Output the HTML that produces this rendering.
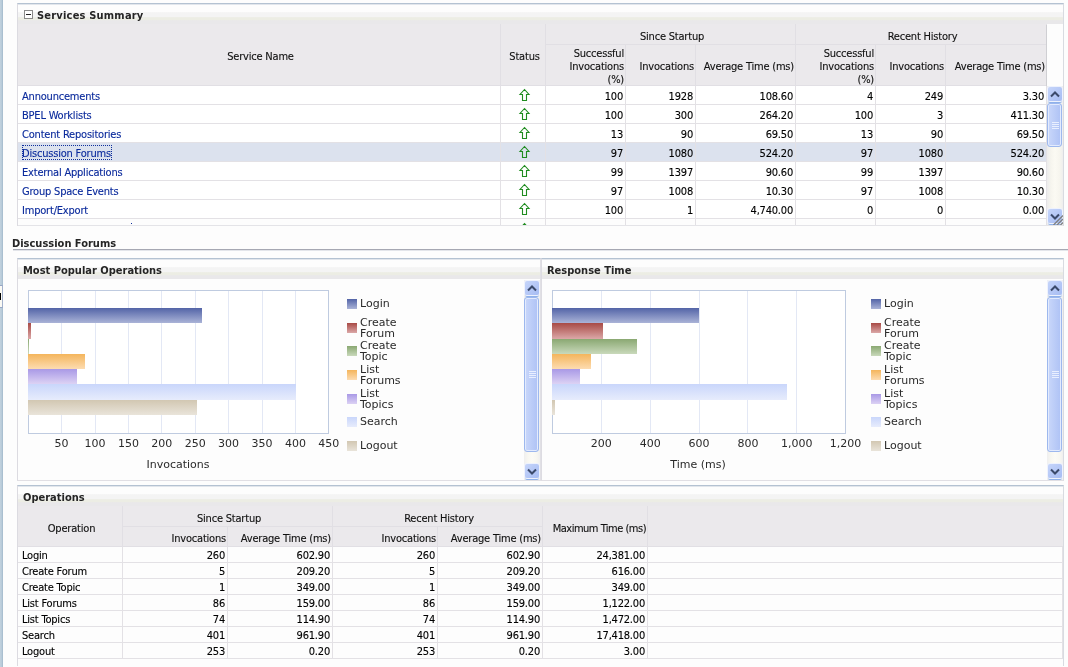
<!DOCTYPE html>
<html lang="en"><head><meta charset="utf-8"><title>Services Summary</title>
<style>
html,body{margin:0;padding:0;}
body{width:1068px;height:667px;overflow:hidden;background:#fff;position:relative;
 font-family:"DejaVu Sans Condensed","Liberation Sans",sans-serif;font-size:11px;color:#000;letter-spacing:-0.2px;-webkit-text-stroke:0.12px;}
div,span,a{box-sizing:border-box;}
.abs{position:absolute;}
.root{left:0;top:0;width:1068px;height:667px;overflow:hidden;will-change:transform;background:#fdfdfd;}
.strip{left:0;top:0;width:3px;height:667px;background:#b3c7d7;}
.panel{border-left:1px solid #dcdbe1;border-right:1px solid #d8dbe1;border-top:1px solid #b4c2d2;}
.phead{left:0;top:0;right:0;height:20px;
 background:linear-gradient(#fdfdfd 0,#fdfdfd 8px,#f4f4f4 8.6px,#f4f4f4 13px,#ecede4 13.6px,#ecede4 16px,#e9e8ea 16.6px,#e9e8ea 100%);}
.ptitle{-webkit-text-stroke:0;font-weight:bold;font-size:11px;color:#252525;white-space:nowrap;line-height:13px;letter-spacing:0;}
.th{background:#ebe9ec;border-right:1px solid #e1dfe4;border-bottom:1px solid #e1dfe4;color:#111;
 display:flex;align-items:center;justify-content:center;text-align:center;line-height:13px;white-space:nowrap;padding-top:2px;}
.th.c{padding-left:3px;}
.th.r{justify-content:flex-end;text-align:right;padding-right:1px;}
.th.t{padding-top:3px;}
.th.u{padding-top:4px;}
.td{border-right:1px solid #e3e1e5;border-bottom:1px solid #e3e1e5;line-height:13px;white-space:nowrap;overflow:hidden;}
.num{text-align:right;padding-right:2px;}
a.lk{color:#0a2a9c;text-decoration:none;}
.ct{-webkit-text-stroke:0;font-family:"DejaVu Sans","Liberation Sans",sans-serif;font-size:11px;color:#2a2a2a;white-space:nowrap;line-height:11px;letter-spacing:0;}
.sbtn{border-radius:2px;box-shadow:0 0 0 1px #eef2fd,0 2px 0 0 #8fb1ea;background:linear-gradient(135deg,#c6d5fa,#a6bcf3);}
.sthumb{border-radius:3px;border:1px solid #9db8ee;box-shadow:inset 0 0 0 1px #e3ebfd;background:linear-gradient(90deg,#c9d7fa,#aec2f5);}
</style></head>
<body>
<div class="abs root">
<div class="abs " style="left:0px;top:0px;width:3px;height:667px;background:linear-gradient(90deg,#c2d2de,#b0c5d5);"></div>
<div class="abs " style="left:2px;top:0px;width:1px;height:667px;background:#aabfd0;"></div>
<div class="abs " style="left:0px;top:285px;width:3px;height:23px;background:#fbfaf4;border-top:1px solid #97a6c4;border-bottom:1px solid #97a6c4;border-right:1px solid #a3b1cc;"></div>
<div class="abs " style="left:0px;top:293px;width:1px;height:7px;background:#000;"></div>
<div class="abs panel" style="left:17px;top:3px;width:1047px;height:223px;"></div>
<div class="abs phead" style="left:18px;top:4px;width:1045px;height:20px;"></div>
<div class="abs " style="left:18px;top:4px;width:1045px;height:1px;background:#e2e6ec;"></div>
<div class="abs " style="left:24px;top:10px;width:9px;height:9px;border:1px solid #8a8a8a;background:#fff;"></div>
<div class="abs " style="left:26px;top:14px;width:5px;height:1px;background:#222;"></div>
<div class="abs ptitle" style="left:37px;top:9px;letter-spacing:0.2px">Services Summary</div>
<div class="abs th c t" style="left:18px;top:24px;width:483px;height:62px;">Service Name</div>
<div class="abs th c t" style="left:501px;top:24px;width:45px;height:62px;">Status</div>
<div class="abs th c u" style="left:546px;top:24px;width:250px;height:21px;">Since Startup</div>
<div class="abs th c u" style="left:796px;top:24px;width:251px;height:21px;">Recent History</div>
<div class="abs th r" style="left:546px;top:45px;width:80px;height:41px;">Successful<br>Invocations<br>(%)</div>
<div class="abs th r" style="left:626px;top:45px;width:70px;height:41px;">Invocations</div>
<div class="abs th r" style="left:696px;top:45px;width:100px;height:41px;">Average Time (ms)</div>
<div class="abs th r" style="left:796px;top:45px;width:80px;height:41px;">Successful<br>Invocations<br>(%)</div>
<div class="abs th r" style="left:876px;top:45px;width:70px;height:41px;">Invocations</div>
<div class="abs th r" style="left:946px;top:45px;width:101px;height:41px;">Average Time (ms)</div>
<div class="abs " style="left:1047px;top:24px;width:16px;height:62px;background:#fdfdfd;"></div>
<div class="abs " style="left:1046px;top:25px;width:1px;height:61px;background:#cfcfd3;"></div>
<div class="abs td" style="left:18px;top:86px;width:483px;height:19px;background:#fff;"><a class="lk" style="position:absolute;left:4px;top:4px">Announcements</a></div>
<div class="abs td" style="left:501px;top:86px;width:45px;height:19px;background:#fff;"></div>
<svg class="abs" style="left:518px;top:88px" width="13" height="14" viewBox="0 0 13 14"><path d="M6.5 1.5 L2 6.5 L4.5 6.5 L4.5 12.5 L8.5 12.5 L8.5 6.5 L11 6.5 Z" fill="#fff" fill-opacity="0" stroke="#1f8c1f" stroke-width="1.1" stroke-linejoin="miter"/></svg>
<div class="abs td num" style="left:546px;top:86px;width:80px;height:19px;background:#fff;padding-top:4px;">100</div>
<div class="abs td num" style="left:626px;top:86px;width:70px;height:19px;background:#fff;padding-top:4px;">1928</div>
<div class="abs td num" style="left:696px;top:86px;width:100px;height:19px;background:#fff;padding-top:4px;">108.60</div>
<div class="abs td num" style="left:796px;top:86px;width:80px;height:19px;background:#fff;padding-top:4px;">4</div>
<div class="abs td num" style="left:876px;top:86px;width:70px;height:19px;background:#fff;padding-top:4px;">249</div>
<div class="abs td num" style="left:946px;top:86px;width:101px;height:19px;background:#fff;padding-top:4px;">3.30</div>
<div class="abs td" style="left:18px;top:105px;width:483px;height:19px;background:#fff;"><a class="lk" style="position:absolute;left:4px;top:4px">BPEL Worklists</a></div>
<div class="abs td" style="left:501px;top:105px;width:45px;height:19px;background:#fff;"></div>
<svg class="abs" style="left:518px;top:107px" width="13" height="14" viewBox="0 0 13 14"><path d="M6.5 1.5 L2 6.5 L4.5 6.5 L4.5 12.5 L8.5 12.5 L8.5 6.5 L11 6.5 Z" fill="#fff" fill-opacity="0" stroke="#1f8c1f" stroke-width="1.1" stroke-linejoin="miter"/></svg>
<div class="abs td num" style="left:546px;top:105px;width:80px;height:19px;background:#fff;padding-top:4px;">100</div>
<div class="abs td num" style="left:626px;top:105px;width:70px;height:19px;background:#fff;padding-top:4px;">300</div>
<div class="abs td num" style="left:696px;top:105px;width:100px;height:19px;background:#fff;padding-top:4px;">264.20</div>
<div class="abs td num" style="left:796px;top:105px;width:80px;height:19px;background:#fff;padding-top:4px;">100</div>
<div class="abs td num" style="left:876px;top:105px;width:70px;height:19px;background:#fff;padding-top:4px;">3</div>
<div class="abs td num" style="left:946px;top:105px;width:101px;height:19px;background:#fff;padding-top:4px;">411.30</div>
<div class="abs td" style="left:18px;top:124px;width:483px;height:19px;background:#fff;"><a class="lk" style="position:absolute;left:4px;top:4px">Content Repositories</a></div>
<div class="abs td" style="left:501px;top:124px;width:45px;height:19px;background:#fff;"></div>
<svg class="abs" style="left:518px;top:126px" width="13" height="14" viewBox="0 0 13 14"><path d="M6.5 1.5 L2 6.5 L4.5 6.5 L4.5 12.5 L8.5 12.5 L8.5 6.5 L11 6.5 Z" fill="#fff" fill-opacity="0" stroke="#1f8c1f" stroke-width="1.1" stroke-linejoin="miter"/></svg>
<div class="abs td num" style="left:546px;top:124px;width:80px;height:19px;background:#fff;padding-top:4px;">13</div>
<div class="abs td num" style="left:626px;top:124px;width:70px;height:19px;background:#fff;padding-top:4px;">90</div>
<div class="abs td num" style="left:696px;top:124px;width:100px;height:19px;background:#fff;padding-top:4px;">69.50</div>
<div class="abs td num" style="left:796px;top:124px;width:80px;height:19px;background:#fff;padding-top:4px;">13</div>
<div class="abs td num" style="left:876px;top:124px;width:70px;height:19px;background:#fff;padding-top:4px;">90</div>
<div class="abs td num" style="left:946px;top:124px;width:101px;height:19px;background:#fff;padding-top:4px;">69.50</div>
<div class="abs td" style="left:18px;top:143px;width:483px;height:19px;background:#dce2ee;"><a class="lk" style="position:absolute;left:4px;top:2px;padding:2px 1px 0 0;outline:1px dotted #10309c;outline-offset:-1px;line-height:13px">Discussion Forums</a></div>
<div class="abs td" style="left:501px;top:143px;width:45px;height:19px;background:#dce2ee;"></div>
<svg class="abs" style="left:518px;top:145px" width="13" height="14" viewBox="0 0 13 14"><path d="M6.5 1.5 L2 6.5 L4.5 6.5 L4.5 12.5 L8.5 12.5 L8.5 6.5 L11 6.5 Z" fill="#fff" fill-opacity="0" stroke="#1f8c1f" stroke-width="1.1" stroke-linejoin="miter"/></svg>
<div class="abs td num" style="left:546px;top:143px;width:80px;height:19px;background:#dce2ee;padding-top:4px;">97</div>
<div class="abs td num" style="left:626px;top:143px;width:70px;height:19px;background:#dce2ee;padding-top:4px;">1080</div>
<div class="abs td num" style="left:696px;top:143px;width:100px;height:19px;background:#dce2ee;padding-top:4px;">524.20</div>
<div class="abs td num" style="left:796px;top:143px;width:80px;height:19px;background:#dce2ee;padding-top:4px;">97</div>
<div class="abs td num" style="left:876px;top:143px;width:70px;height:19px;background:#dce2ee;padding-top:4px;">1080</div>
<div class="abs td num" style="left:946px;top:143px;width:101px;height:19px;background:#dce2ee;padding-top:4px;">524.20</div>
<div class="abs td" style="left:18px;top:162px;width:483px;height:19px;background:#fff;"><a class="lk" style="position:absolute;left:4px;top:4px">External Applications</a></div>
<div class="abs td" style="left:501px;top:162px;width:45px;height:19px;background:#fff;"></div>
<svg class="abs" style="left:518px;top:164px" width="13" height="14" viewBox="0 0 13 14"><path d="M6.5 1.5 L2 6.5 L4.5 6.5 L4.5 12.5 L8.5 12.5 L8.5 6.5 L11 6.5 Z" fill="#fff" fill-opacity="0" stroke="#1f8c1f" stroke-width="1.1" stroke-linejoin="miter"/></svg>
<div class="abs td num" style="left:546px;top:162px;width:80px;height:19px;background:#fff;padding-top:4px;">99</div>
<div class="abs td num" style="left:626px;top:162px;width:70px;height:19px;background:#fff;padding-top:4px;">1397</div>
<div class="abs td num" style="left:696px;top:162px;width:100px;height:19px;background:#fff;padding-top:4px;">90.60</div>
<div class="abs td num" style="left:796px;top:162px;width:80px;height:19px;background:#fff;padding-top:4px;">99</div>
<div class="abs td num" style="left:876px;top:162px;width:70px;height:19px;background:#fff;padding-top:4px;">1397</div>
<div class="abs td num" style="left:946px;top:162px;width:101px;height:19px;background:#fff;padding-top:4px;">90.60</div>
<div class="abs td" style="left:18px;top:181px;width:483px;height:19px;background:#fff;"><a class="lk" style="position:absolute;left:4px;top:4px">Group Space Events</a></div>
<div class="abs td" style="left:501px;top:181px;width:45px;height:19px;background:#fff;"></div>
<svg class="abs" style="left:518px;top:183px" width="13" height="14" viewBox="0 0 13 14"><path d="M6.5 1.5 L2 6.5 L4.5 6.5 L4.5 12.5 L8.5 12.5 L8.5 6.5 L11 6.5 Z" fill="#fff" fill-opacity="0" stroke="#1f8c1f" stroke-width="1.1" stroke-linejoin="miter"/></svg>
<div class="abs td num" style="left:546px;top:181px;width:80px;height:19px;background:#fff;padding-top:4px;">97</div>
<div class="abs td num" style="left:626px;top:181px;width:70px;height:19px;background:#fff;padding-top:4px;">1008</div>
<div class="abs td num" style="left:696px;top:181px;width:100px;height:19px;background:#fff;padding-top:4px;">10.30</div>
<div class="abs td num" style="left:796px;top:181px;width:80px;height:19px;background:#fff;padding-top:4px;">97</div>
<div class="abs td num" style="left:876px;top:181px;width:70px;height:19px;background:#fff;padding-top:4px;">1008</div>
<div class="abs td num" style="left:946px;top:181px;width:101px;height:19px;background:#fff;padding-top:4px;">10.30</div>
<div class="abs td" style="left:18px;top:200px;width:483px;height:19px;background:#fff;"><a class="lk" style="position:absolute;left:4px;top:4px">Import/Export</a></div>
<div class="abs td" style="left:501px;top:200px;width:45px;height:19px;background:#fff;"></div>
<svg class="abs" style="left:518px;top:202px" width="13" height="14" viewBox="0 0 13 14"><path d="M6.5 1.5 L2 6.5 L4.5 6.5 L4.5 12.5 L8.5 12.5 L8.5 6.5 L11 6.5 Z" fill="#fff" fill-opacity="0" stroke="#1f8c1f" stroke-width="1.1" stroke-linejoin="miter"/></svg>
<div class="abs td num" style="left:546px;top:200px;width:80px;height:19px;background:#fff;padding-top:4px;">100</div>
<div class="abs td num" style="left:626px;top:200px;width:70px;height:19px;background:#fff;padding-top:4px;">1</div>
<div class="abs td num" style="left:696px;top:200px;width:100px;height:19px;background:#fff;padding-top:4px;">4,740.00</div>
<div class="abs td num" style="left:796px;top:200px;width:80px;height:19px;background:#fff;padding-top:4px;">0</div>
<div class="abs td num" style="left:876px;top:200px;width:70px;height:19px;background:#fff;padding-top:4px;">0</div>
<div class="abs td num" style="left:946px;top:200px;width:101px;height:19px;background:#fff;padding-top:4px;">0.00</div>
<div class="abs td" style="left:18px;top:219px;width:483px;height:6px;border-bottom:none;"></div>
<div class="abs td" style="left:501px;top:219px;width:45px;height:6px;border-bottom:none;"></div>
<div class="abs td" style="left:546px;top:219px;width:80px;height:6px;border-bottom:none;"></div>
<div class="abs td" style="left:626px;top:219px;width:70px;height:6px;border-bottom:none;"></div>
<div class="abs td" style="left:696px;top:219px;width:100px;height:6px;border-bottom:none;"></div>
<div class="abs td" style="left:796px;top:219px;width:80px;height:6px;border-bottom:none;"></div>
<div class="abs td" style="left:876px;top:219px;width:70px;height:6px;border-bottom:none;"></div>
<div class="abs td" style="left:946px;top:219px;width:101px;height:6px;border-bottom:none;"></div>
<div class="abs " style="left:501px;top:219px;width:45px;height:6px;overflow:hidden;"><svg class="abs" style="left:17px;top:3px" width="13" height="14" viewBox="0 0 13 14"><path d="M6.5 1.5 L2 6.5 L4.5 6.5 L4.5 12.5 L8.5 12.5 L8.5 6.5 L11 6.5 Z" fill="#fff" fill-opacity="0" stroke="#1f8c1f" stroke-width="1.1" stroke-linejoin="miter"/></svg></div>
<div class="abs " style="left:131px;top:223px;width:1px;height:1px;background:#10309c;"></div>
<div class="abs " style="left:18px;top:225px;width:1045px;height:1px;background:#e4e4e8;"></div>
<div class="abs " style="left:1047px;top:86px;width:16px;height:139px;background:linear-gradient(90deg,#ececec,#f6f5ee 25%,#fbfaf3 50%,#f6f5ee 80%,#eeeeee);"></div>
<div class="abs sbtn" style="left:1048px;top:87px;width:14px;height:14px;"></div>
<svg class="abs" style="left:1050px;top:91px" width="10" height="7" viewBox="0 0 10 7"><path d="M1 5.5 L5 1.5 L9 5.5" fill="none" stroke="#3b4a6b" stroke-width="2" stroke-linejoin="miter"/></svg>
<div class="abs sthumb" style="left:1047px;top:103px;width:15px;height:44px;"></div>
<div class="abs " style="left:1052px;top:122px;width:7px;height:1px;background:#e9efff;"></div>
<div class="abs " style="left:1052px;top:124px;width:7px;height:1px;background:#e9efff;"></div>
<div class="abs " style="left:1052px;top:126px;width:7px;height:1px;background:#e9efff;"></div>
<div class="abs " style="left:1052px;top:128px;width:7px;height:1px;background:#e9efff;"></div>
<div class="abs sbtn" style="left:1048px;top:209px;width:14px;height:14px;"></div>
<svg class="abs" style="left:1050px;top:213px" width="10" height="7" viewBox="0 0 10 7"><path d="M1 1.5 L5 5.5 L9 1.5" fill="none" stroke="#3b4a6b" stroke-width="2" stroke-linejoin="miter"/></svg>
<svg class="abs" style="left:1051px;top:213px" width="12" height="12" viewBox="0 0 12 12"><path d="M2.5 12 L12 2.5 M6 12 L12 6 M9.5 12 L12 9.5" stroke="#808080" stroke-width="1.3" fill="none"/></svg>
<div class="abs ptitle" style="left:12px;top:237px;">Discussion Forums</div>
<div class="abs " style="left:13px;top:249px;width:1055px;height:1px;background:#a6a8b3;"></div>
<div class="abs " style="left:13px;top:250px;width:1055px;height:1px;background:#e3e5ea;"></div>
<div class="abs panel" style="left:17px;top:258px;width:524px;height:223px;border-bottom:1px solid #e1dfe4;border-right-color:#e1e0e5;"></div>
<div class="abs phead" style="left:18px;top:259px;width:522px;height:20px;"></div>
<div class="abs " style="left:18px;top:259px;width:522px;height:1px;background:#e2e6ec;"></div>
<div class="abs ptitle" style="left:23px;top:264px;">Most Popular Operations</div>
<div class="abs " style="left:28px;top:290px;width:301px;height:144px;border:1px solid #bfcbe0;background:#fff;"></div>
<div class="abs " style="left:61px;top:291px;width:1px;height:142px;background:#e3e8f5;"></div>
<div class="abs ct" style="left:31.6px;top:438px;width:60px;text-align:center;">50</div>
<div class="abs " style="left:95px;top:291px;width:1px;height:142px;background:#e3e8f5;"></div>
<div class="abs ct" style="left:65px;top:438px;width:60px;text-align:center;">100</div>
<div class="abs " style="left:128px;top:291px;width:1px;height:142px;background:#e3e8f5;"></div>
<div class="abs ct" style="left:98.4px;top:438px;width:60px;text-align:center;">150</div>
<div class="abs " style="left:161px;top:291px;width:1px;height:142px;background:#e3e8f5;"></div>
<div class="abs ct" style="left:131.8px;top:438px;width:60px;text-align:center;">200</div>
<div class="abs " style="left:195px;top:291px;width:1px;height:142px;background:#e3e8f5;"></div>
<div class="abs ct" style="left:165.2px;top:438px;width:60px;text-align:center;">250</div>
<div class="abs " style="left:228px;top:291px;width:1px;height:142px;background:#e3e8f5;"></div>
<div class="abs ct" style="left:198.6px;top:438px;width:60px;text-align:center;">300</div>
<div class="abs " style="left:262px;top:291px;width:1px;height:142px;background:#e3e8f5;"></div>
<div class="abs ct" style="left:232px;top:438px;width:60px;text-align:center;">350</div>
<div class="abs " style="left:295px;top:291px;width:1px;height:142px;background:#e3e8f5;"></div>
<div class="abs ct" style="left:265.4px;top:438px;width:60px;text-align:center;">400</div>
<div class="abs ct" style="left:298.8px;top:438px;width:60px;text-align:center;">450</div>
<div class="abs " style="left:28px;top:308px;width:173.68px;height:15px;background:linear-gradient(#5364a7,#aab3d7);"></div>
<div class="abs " style="left:28px;top:323px;width:3.34px;height:16px;background:linear-gradient(#a84a45,#dba8a8);"></div>
<div class="abs " style="left:28px;top:339px;width:0.8px;height:15px;background:linear-gradient(#8aa872,#c9d9bb);"></div>
<div class="abs " style="left:28px;top:354px;width:57.448px;height:15px;background:linear-gradient(#f4b55c,#fddcb1);"></div>
<div class="abs " style="left:28px;top:369px;width:49.432px;height:15px;background:linear-gradient(#a999e6,#dcd2f4);"></div>
<div class="abs " style="left:28px;top:384px;width:267.868px;height:16px;background:linear-gradient(#c9d6fb,#e7ecfc);"></div>
<div class="abs " style="left:28px;top:400px;width:169.004px;height:15px;background:linear-gradient(#d2c7b2,#e9e4da);"></div>
<div class="abs ct" style="left:118px;top:459px;width:120px;text-align:center;">Invocations</div>
<div class="abs " style="left:347px;top:299px;width:10px;height:10px;background:linear-gradient(#5364a7,#aab3d7);"></div>
<div class="abs ct" style="left:360px;top:298px;">Login</div>
<div class="abs " style="left:347px;top:323px;width:10px;height:10px;background:linear-gradient(#a84a45,#dba8a8);"></div>
<div class="abs ct" style="left:360px;top:316.5px;">Create<br>Forum</div>
<div class="abs " style="left:347px;top:346px;width:10px;height:10px;background:linear-gradient(#8aa872,#c9d9bb);"></div>
<div class="abs ct" style="left:360px;top:339.5px;">Create<br>Topic</div>
<div class="abs " style="left:347px;top:370px;width:10px;height:10px;background:linear-gradient(#f4b55c,#fddcb1);"></div>
<div class="abs ct" style="left:360px;top:363.5px;">List<br>Forums</div>
<div class="abs " style="left:347px;top:394px;width:10px;height:10px;background:linear-gradient(#a999e6,#dcd2f4);"></div>
<div class="abs ct" style="left:360px;top:387.5px;">List<br>Topics</div>
<div class="abs " style="left:347px;top:417px;width:10px;height:10px;background:linear-gradient(#c9d6fb,#e7ecfc);"></div>
<div class="abs ct" style="left:360px;top:416px;">Search</div>
<div class="abs " style="left:347px;top:441px;width:10px;height:10px;background:linear-gradient(#d2c7b2,#e9e4da);"></div>
<div class="abs ct" style="left:360px;top:440px;">Logout</div>
<div class="abs " style="left:524px;top:280px;width:16px;height:200px;background:linear-gradient(90deg,#efefef,#f8f7f1 25%,#fcfbf6 50%,#f8f7f1 80%,#efefef);"></div>
<div class="abs sbtn" style="left:525px;top:281px;width:14px;height:14px;"></div>
<svg class="abs" style="left:527px;top:285px" width="10" height="7" viewBox="0 0 10 7"><path d="M1 5.5 L5 1.5 L9 5.5" fill="none" stroke="#3b4a6b" stroke-width="2" stroke-linejoin="miter"/></svg>
<div class="abs sthumb" style="left:524px;top:297px;width:15px;height:155px;"></div>
<div class="abs " style="left:529px;top:371px;width:7px;height:1px;background:#e9efff;"></div>
<div class="abs " style="left:529px;top:373px;width:7px;height:1px;background:#e9efff;"></div>
<div class="abs " style="left:529px;top:375px;width:7px;height:1px;background:#e9efff;"></div>
<div class="abs " style="left:529px;top:377px;width:7px;height:1px;background:#e9efff;"></div>
<div class="abs sbtn" style="left:525px;top:464px;width:14px;height:14px;"></div>
<svg class="abs" style="left:527px;top:468px" width="10" height="7" viewBox="0 0 10 7"><path d="M1 1.5 L5 5.5 L9 1.5" fill="none" stroke="#3b4a6b" stroke-width="2" stroke-linejoin="miter"/></svg>
<div class="abs panel" style="left:541px;top:258px;width:523px;height:223px;border-bottom:1px solid #e1dfe4;border-left-color:#dddce2;"></div>
<div class="abs phead" style="left:542px;top:259px;width:521px;height:20px;"></div>
<div class="abs " style="left:542px;top:259px;width:521px;height:1px;background:#e2e6ec;"></div>
<div class="abs ptitle" style="left:547px;top:264px;">Response Time</div>
<div class="abs " style="left:552px;top:290px;width:294px;height:144px;border:1px solid #bfcbe0;background:#fff;"></div>
<div class="abs " style="left:601px;top:291px;width:1px;height:142px;background:#e3e8f5;"></div>
<div class="abs ct" style="left:571.35px;top:438px;width:60px;text-align:center;">200</div>
<div class="abs " style="left:650px;top:291px;width:1px;height:142px;background:#e3e8f5;"></div>
<div class="abs ct" style="left:620.2px;top:438px;width:60px;text-align:center;">400</div>
<div class="abs " style="left:699px;top:291px;width:1px;height:142px;background:#e3e8f5;"></div>
<div class="abs ct" style="left:669.05px;top:438px;width:60px;text-align:center;">600</div>
<div class="abs " style="left:747px;top:291px;width:1px;height:142px;background:#e3e8f5;"></div>
<div class="abs ct" style="left:717.9px;top:438px;width:60px;text-align:center;">800</div>
<div class="abs " style="left:796px;top:291px;width:1px;height:142px;background:#e3e8f5;"></div>
<div class="abs ct" style="left:766.75px;top:438px;width:60px;text-align:center;">1,000</div>
<div class="abs ct" style="left:815.6px;top:438px;width:60px;text-align:center;">1,200</div>
<div class="abs " style="left:552px;top:308px;width:147.409px;height:15px;background:linear-gradient(#5364a7,#aab3d7);"></div>
<div class="abs " style="left:552px;top:323px;width:51.1494px;height:16px;background:linear-gradient(#a84a45,#dba8a8);"></div>
<div class="abs " style="left:552px;top:339px;width:85.3305px;height:15px;background:linear-gradient(#8aa872,#c9d9bb);"></div>
<div class="abs " style="left:552px;top:354px;width:38.8755px;height:15px;background:linear-gradient(#f4b55c,#fddcb1);"></div>
<div class="abs " style="left:552px;top:369px;width:28.0931px;height:15px;background:linear-gradient(#a999e6,#dcd2f4);"></div>
<div class="abs " style="left:552px;top:384px;width:235.185px;height:16px;background:linear-gradient(#c9d6fb,#e7ecfc);"></div>
<div class="abs " style="left:552px;top:400px;width:2.934px;height:15px;background:linear-gradient(#d2c7b2,#e9e4da);"></div>
<div class="abs ct" style="left:638px;top:459px;width:120px;text-align:center;">Time (ms)</div>
<div class="abs " style="left:871px;top:299px;width:10px;height:10px;background:linear-gradient(#5364a7,#aab3d7);"></div>
<div class="abs ct" style="left:884px;top:298px;">Login</div>
<div class="abs " style="left:871px;top:323px;width:10px;height:10px;background:linear-gradient(#a84a45,#dba8a8);"></div>
<div class="abs ct" style="left:884px;top:316.5px;">Create<br>Forum</div>
<div class="abs " style="left:871px;top:346px;width:10px;height:10px;background:linear-gradient(#8aa872,#c9d9bb);"></div>
<div class="abs ct" style="left:884px;top:339.5px;">Create<br>Topic</div>
<div class="abs " style="left:871px;top:370px;width:10px;height:10px;background:linear-gradient(#f4b55c,#fddcb1);"></div>
<div class="abs ct" style="left:884px;top:363.5px;">List<br>Forums</div>
<div class="abs " style="left:871px;top:394px;width:10px;height:10px;background:linear-gradient(#a999e6,#dcd2f4);"></div>
<div class="abs ct" style="left:884px;top:387.5px;">List<br>Topics</div>
<div class="abs " style="left:871px;top:417px;width:10px;height:10px;background:linear-gradient(#c9d6fb,#e7ecfc);"></div>
<div class="abs ct" style="left:884px;top:416px;">Search</div>
<div class="abs " style="left:871px;top:441px;width:10px;height:10px;background:linear-gradient(#d2c7b2,#e9e4da);"></div>
<div class="abs ct" style="left:884px;top:440px;">Logout</div>
<div class="abs " style="left:1047px;top:280px;width:16px;height:200px;background:linear-gradient(90deg,#efefef,#f8f7f1 25%,#fcfbf6 50%,#f8f7f1 80%,#efefef);"></div>
<div class="abs sbtn" style="left:1048px;top:281px;width:14px;height:14px;"></div>
<svg class="abs" style="left:1050px;top:285px" width="10" height="7" viewBox="0 0 10 7"><path d="M1 5.5 L5 1.5 L9 5.5" fill="none" stroke="#3b4a6b" stroke-width="2" stroke-linejoin="miter"/></svg>
<div class="abs sthumb" style="left:1047px;top:297px;width:15px;height:155px;"></div>
<div class="abs " style="left:1052px;top:371px;width:7px;height:1px;background:#e9efff;"></div>
<div class="abs " style="left:1052px;top:373px;width:7px;height:1px;background:#e9efff;"></div>
<div class="abs " style="left:1052px;top:375px;width:7px;height:1px;background:#e9efff;"></div>
<div class="abs " style="left:1052px;top:377px;width:7px;height:1px;background:#e9efff;"></div>
<div class="abs sbtn" style="left:1048px;top:464px;width:14px;height:14px;"></div>
<svg class="abs" style="left:1050px;top:468px" width="10" height="7" viewBox="0 0 10 7"><path d="M1 1.5 L5 5.5 L9 1.5" fill="none" stroke="#3b4a6b" stroke-width="2" stroke-linejoin="miter"/></svg>
<div class="abs panel" style="left:17px;top:485px;width:1047px;height:181px;"></div>
<div class="abs phead" style="left:18px;top:486px;width:1045px;height:20px;"></div>
<div class="abs " style="left:18px;top:486px;width:1045px;height:1px;background:#e2e6ec;"></div>
<div class="abs ptitle" style="left:23px;top:491px;">Operations</div>
<div class="abs " style="left:18px;top:506px;width:1045px;height:41px;background:#ebe9ec;border-bottom:1px solid #e1dfe4;"></div>
<div class="abs th c u" style="left:18px;top:506px;width:105px;height:41px;">Operation</div>
<div class="abs th c u" style="left:123px;top:506px;width:210px;height:21px;">Since Startup</div>
<div class="abs th c u" style="left:333px;top:506px;width:210px;height:21px;">Recent History</div>
<div class="abs th r t" style="left:123px;top:527px;width:105px;height:20px;">Invocations</div>
<div class="abs th r t" style="left:228px;top:527px;width:105px;height:20px;">Average Time (ms)</div>
<div class="abs th r t" style="left:333px;top:527px;width:105px;height:20px;">Invocations</div>
<div class="abs th r t" style="left:438px;top:527px;width:105px;height:20px;">Average Time (ms)</div>
<div class="abs th r u" style="left:543px;top:506px;width:105px;height:41px;"><span style="letter-spacing:-0.5px">Maximum Time (ms)</span></div>
<div class="abs td" style="left:18px;top:547px;width:105px;height:16px;padding-left:4px;padding-top:2px;">Login</div>
<div class="abs td num" style="left:123px;top:547px;width:105px;height:16px;padding-top:2px;">260</div>
<div class="abs td num" style="left:228px;top:547px;width:105px;height:16px;padding-top:2px;">602.90</div>
<div class="abs td num" style="left:333px;top:547px;width:105px;height:16px;padding-top:2px;">260</div>
<div class="abs td num" style="left:438px;top:547px;width:105px;height:16px;padding-top:2px;">602.90</div>
<div class="abs td num" style="left:543px;top:547px;width:105px;height:16px;padding-top:2px;">24,381.00</div>
<div class="abs td" style="left:648px;top:547px;width:415px;height:16px;"></div>
<div class="abs td" style="left:18px;top:563px;width:105px;height:16px;padding-left:4px;padding-top:2px;">Create Forum</div>
<div class="abs td num" style="left:123px;top:563px;width:105px;height:16px;padding-top:2px;">5</div>
<div class="abs td num" style="left:228px;top:563px;width:105px;height:16px;padding-top:2px;">209.20</div>
<div class="abs td num" style="left:333px;top:563px;width:105px;height:16px;padding-top:2px;">5</div>
<div class="abs td num" style="left:438px;top:563px;width:105px;height:16px;padding-top:2px;">209.20</div>
<div class="abs td num" style="left:543px;top:563px;width:105px;height:16px;padding-top:2px;">616.00</div>
<div class="abs td" style="left:648px;top:563px;width:415px;height:16px;"></div>
<div class="abs td" style="left:18px;top:579px;width:105px;height:16px;padding-left:4px;padding-top:2px;">Create Topic</div>
<div class="abs td num" style="left:123px;top:579px;width:105px;height:16px;padding-top:2px;">1</div>
<div class="abs td num" style="left:228px;top:579px;width:105px;height:16px;padding-top:2px;">349.00</div>
<div class="abs td num" style="left:333px;top:579px;width:105px;height:16px;padding-top:2px;">1</div>
<div class="abs td num" style="left:438px;top:579px;width:105px;height:16px;padding-top:2px;">349.00</div>
<div class="abs td num" style="left:543px;top:579px;width:105px;height:16px;padding-top:2px;">349.00</div>
<div class="abs td" style="left:648px;top:579px;width:415px;height:16px;"></div>
<div class="abs td" style="left:18px;top:595px;width:105px;height:16px;padding-left:4px;padding-top:2px;">List Forums</div>
<div class="abs td num" style="left:123px;top:595px;width:105px;height:16px;padding-top:2px;">86</div>
<div class="abs td num" style="left:228px;top:595px;width:105px;height:16px;padding-top:2px;">159.00</div>
<div class="abs td num" style="left:333px;top:595px;width:105px;height:16px;padding-top:2px;">86</div>
<div class="abs td num" style="left:438px;top:595px;width:105px;height:16px;padding-top:2px;">159.00</div>
<div class="abs td num" style="left:543px;top:595px;width:105px;height:16px;padding-top:2px;">1,122.00</div>
<div class="abs td" style="left:648px;top:595px;width:415px;height:16px;"></div>
<div class="abs td" style="left:18px;top:611px;width:105px;height:16px;padding-left:4px;padding-top:2px;">List Topics</div>
<div class="abs td num" style="left:123px;top:611px;width:105px;height:16px;padding-top:2px;">74</div>
<div class="abs td num" style="left:228px;top:611px;width:105px;height:16px;padding-top:2px;">114.90</div>
<div class="abs td num" style="left:333px;top:611px;width:105px;height:16px;padding-top:2px;">74</div>
<div class="abs td num" style="left:438px;top:611px;width:105px;height:16px;padding-top:2px;">114.90</div>
<div class="abs td num" style="left:543px;top:611px;width:105px;height:16px;padding-top:2px;">1,472.00</div>
<div class="abs td" style="left:648px;top:611px;width:415px;height:16px;"></div>
<div class="abs td" style="left:18px;top:627px;width:105px;height:16px;padding-left:4px;padding-top:2px;">Search</div>
<div class="abs td num" style="left:123px;top:627px;width:105px;height:16px;padding-top:2px;">401</div>
<div class="abs td num" style="left:228px;top:627px;width:105px;height:16px;padding-top:2px;">961.90</div>
<div class="abs td num" style="left:333px;top:627px;width:105px;height:16px;padding-top:2px;">401</div>
<div class="abs td num" style="left:438px;top:627px;width:105px;height:16px;padding-top:2px;">961.90</div>
<div class="abs td num" style="left:543px;top:627px;width:105px;height:16px;padding-top:2px;">17,418.00</div>
<div class="abs td" style="left:648px;top:627px;width:415px;height:16px;"></div>
<div class="abs td" style="left:18px;top:643px;width:105px;height:16px;padding-left:4px;padding-top:2px;">Logout</div>
<div class="abs td num" style="left:123px;top:643px;width:105px;height:16px;padding-top:2px;">253</div>
<div class="abs td num" style="left:228px;top:643px;width:105px;height:16px;padding-top:2px;">0.20</div>
<div class="abs td num" style="left:333px;top:643px;width:105px;height:16px;padding-top:2px;">253</div>
<div class="abs td num" style="left:438px;top:643px;width:105px;height:16px;padding-top:2px;">0.20</div>
<div class="abs td num" style="left:543px;top:643px;width:105px;height:16px;padding-top:2px;">3.00</div>
<div class="abs td" style="left:648px;top:643px;width:415px;height:16px;"></div>
</div>
</body></html>
